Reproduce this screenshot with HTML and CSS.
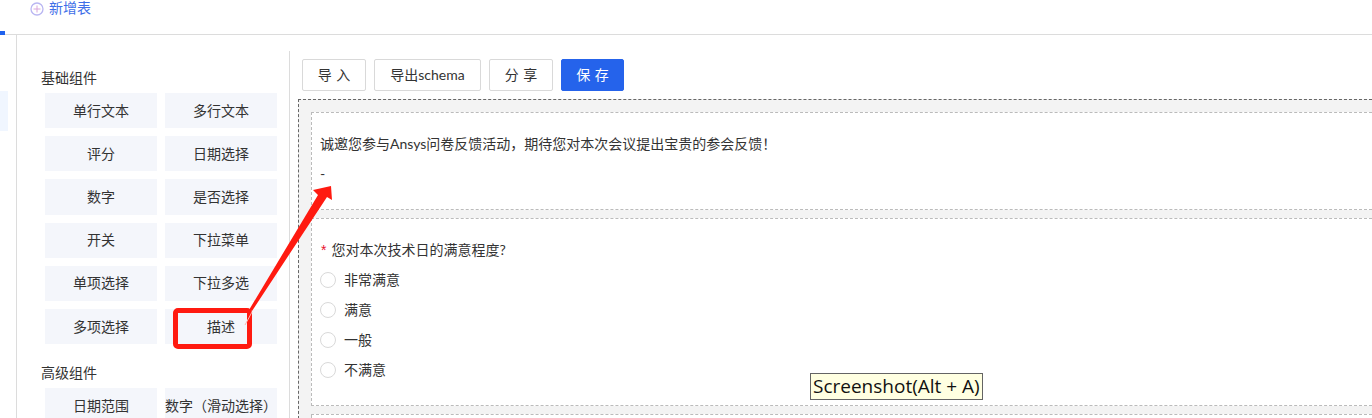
FILE: index.html
```html
<!DOCTYPE html>
<html lang="zh-CN">
<head>
<meta charset="utf-8">
<title>新增表</title>
<link rel="stylesheet" href="styles.css">
</head>
<body>
<header class="topbar">
  <div class="tab">
    <svg class="tab-icon" width="14" height="14" viewBox="0 0 14 14"><circle cx="7" cy="7" r="6" fill="none" stroke="#b9b6f2" stroke-width="1.3"/><path d="M7 3.5v7M3.5 7h7" stroke="#d8a6dc" stroke-width="1" fill="none"/></svg>
    <span class="tab-label">新增表</span>
  </div>
  <i class="tab-mark"></i>
</header>
<div class="layout">
  <div class="rail"><div class="rail-active"></div></div>
  <div class="panel">
    <aside class="palette">
      <h3 class="group-title">基础组件</h3>
      <div class="chips">
        <div class="chip">单行文本</div><div class="chip">多行文本</div>
        <div class="chip">评分</div><div class="chip">日期选择</div>
        <div class="chip">数字</div><div class="chip">是否选择</div>
        <div class="chip">开关</div><div class="chip">下拉菜单</div>
        <div class="chip">单项选择</div><div class="chip">下拉多选</div>
        <div class="chip">多项选择</div><div class="chip">描述</div>
      </div>
      <h3 class="group-title group-title-next">高级组件</h3>
      <div class="chips">
        <div class="chip">日期范围</div><div class="chip chip-tight">数字（滑动选择）</div>
      </div>
    </aside>
    <main class="editor">
      <div class="toolbar">
        <button class="btn">导 入</button>
        <button class="btn btn-wide">导出schema</button>
        <button class="btn">分 享</button>
        <button class="btn btn-primary">保 存</button>
      </div>
      <section class="canvas">
        <div class="block block-desc">
          <p class="desc-line">诚邀您参与Ansys问卷反馈活动，期待您对本次会议提出宝贵的参会反馈！</p>
          <p class="desc-line desc-dash">-</p>
        </div>
        <div class="block block-question">
          <div class="question"><span class="required">*</span>您对本次技术日的满意程度?</div>
          <label class="option"><i class="radio"></i>非常满意</label>
          <label class="option"><i class="radio"></i>满意</label>
          <label class="option"><i class="radio"></i>一般</label>
          <label class="option"><i class="radio"></i>不满意</label>
        </div>
        <div class="block"></div>
      </section>
    </main>
  </div>
</div>
<div class="callout-box"></div>
<svg class="callout-arrow" width="100" height="150" viewBox="240 180 100 150"><path d="M252 312L245 325" stroke="#ffb3ad" stroke-width="1" fill="none"/><polygon points="331,186 313,190 318,195 249,310 252,311 327,197 332,200" fill="#ff1a10"/></svg>
<div class="shot-tip">Screenshot(Alt + A)</div>
</body>
</html>
```
FILE: styles.css
```css
* { box-sizing: border-box; }
html, body { margin: 0; height: 418px; overflow: hidden; background: #fff; }
body {
  position: relative;
  font-family: "Lato", "Noto Sans CJK SC", sans-serif;
  font-size: 14px;
  color: #333;
}
.topbar {
  position: relative;
  height: 35px;
  border-bottom: 1px solid #dcdcdc;
  padding-left: 30px;
}
.tab {
  display: flex;
  align-items: center;
  gap: 5px;
  height: 17px;
  color: #3f6fe8;
  font-size: 14px;
  line-height: 17px;
}
.tab-label { padding-bottom: 2px; }
.tab-mark {
  position: absolute;
  left: 0;
  bottom: -1px;
  width: 5px;
  height: 4px;
  background: #1f62ee;
}
.layout { display: flex; height: 383px; overflow: hidden; }
.rail {
  width: 17px;
  flex: none;
  border-right: 1px solid #dcdcdc;
  padding-top: 56px;
}
.rail-active { width: 8px; height: 40px; background: #f0f6ff; }
.panel { display: flex; flex: 1; padding-top: 16px; min-width: 0; }
.palette {
  width: 273px;
  flex: none;
  border-right: 1px solid #dcdcdc;
  padding: 17px 0 0 24px;
}
.group-title {
  margin: 0 0 5px;
  height: 20px;
  font-size: 14px;
  font-weight: 400;
  line-height: 20px;
  color: #333;
}
.group-title-next { margin-top: 19px; }
.chips {
  display: grid;
  grid-template-columns: 112px 112px;
  grid-auto-rows: 35.2px;
  gap: 8px;
  margin-left: 4px;
}
.chip {
  display: flex;
  align-items: center;
  justify-content: center;
  padding-bottom: 2px;
  background: #f4f6fb;
  color: #333;
  white-space: nowrap;
}
.chip-tight { justify-content: flex-start; }
.editor { flex: 1; min-width: 0; padding: 8px 0 0 8px; }
.toolbar { display: flex; gap: 8px; margin: 0 0 8px 4px; }
.btn {
  width: 64px;
  height: 32px;
  padding: 0;
  border: 1px solid #d9d9d9;
  border-radius: 2px;
  background: #fff;
  color: #333;
  font: inherit;
  word-spacing: 1px;
  line-height: 28px;
  white-space: nowrap;
}
.btn-wide { width: 107px; }
.btn-primary { width: 63px; background: #2563eb; border-color: #2563eb; color: #fff; }
.canvas {
  display: flex;
  flex-direction: column;
  gap: 8px;
  height: 320px;
  padding: 12px 0 0 12px;
  background: #f3f3f3;
  border: 1px dashed #666;
  border-right: 0;
  border-bottom: 0;
}
.block {
  flex: none;
  background: #fff;
  border: 1px dashed #bbb;
  border-right: 0;
}
.block:last-child { flex: 1; }
.block-desc { height: 98px; padding: 21px 0 0 8px; }
.desc-line { margin: 0; height: 20px; line-height: 20px; }
.desc-dash { margin-top: 10px; }
.block-question { height: 188px; padding: 21px 0 0 8px; }
.question { height: 20px; line-height: 20px; margin-bottom: 10px; }
.required { color: #e8112d; margin: 0 5px 0 1px; font-family: "Liberation Sans", sans-serif; }
.option {
  display: flex;
  align-items: center;
  gap: 8px;
  height: 20px;
  line-height: 20px;
  margin-bottom: 10px;
}
.radio {
  width: 16px;
  height: 16px;
  border: 1px solid #d9d9d9;
  border-radius: 50%;
  background: #fff;
  flex: none;
}
.callout-box {
  position: absolute;
  left: 173px;
  top: 308px;
  width: 79px;
  height: 41px;
  border: 5px solid #ff1a10;
  border-radius: 5px;
}
.callout-arrow { position: absolute; left: 240px; top: 180px; }
.shot-tip {
  position: absolute;
  left: 810px;
  top: 373px;
  width: 173px;
  height: 27px;
  border: 1px solid #646464;
  background: #ffffe1;
  color: #111;
  font-family: "Open Sans", sans-serif;
  font-size: 19px;
  line-height: 25px;
  padding-left: 2px;
  white-space: nowrap;
}
```
